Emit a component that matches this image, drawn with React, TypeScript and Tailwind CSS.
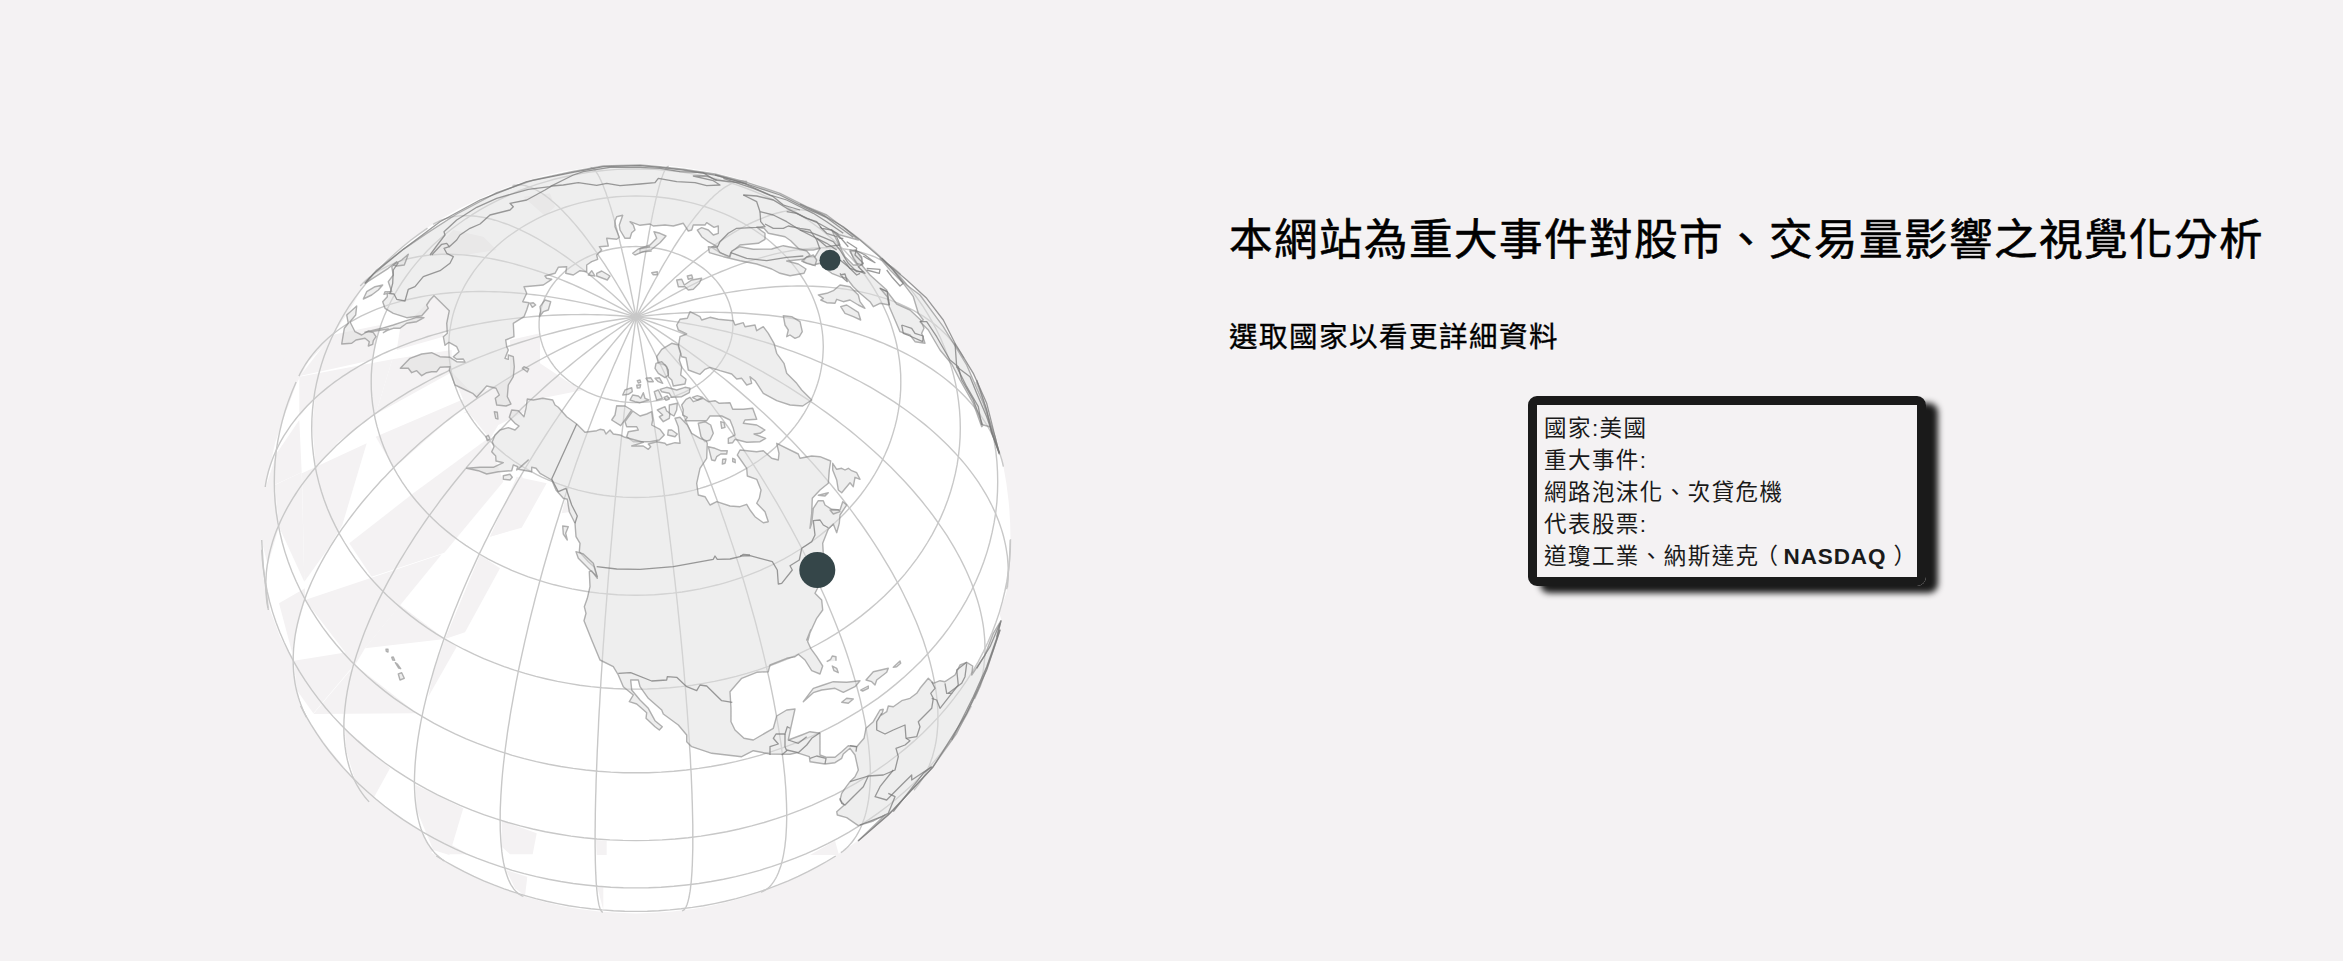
import React from "react";

type Origin = [number, number];
type Part = [Origin, string];

// Sheet origins: every outline is stored in thirds of a pixel, relative to its sheet.
const A: Origin = [250, 150];
const B: Origin = [640, 150];
const C: Origin = [250, 400];
const D: Origin = [450, 380];
const E: Origin = [740, 380];
const F: Origin = [540, 630];
const I: Origin = [600, 310];
const J: Origin = [800, 180];
const K: Origin = [940, 560];
const L: Origin = [255, 325];

const CX = 636;
const CY = 539.2;
const R = 374.5;
const LAT0 = (53.6 * Math.PI) / 180;
const LON0 = -98.73;

function points(parts: Part[]): string {
  return parts
    .map(([o, s]) =>
      s
        .trim()
        .split(/\s+/)
        .map((p) => {
          const [x, y] = p.split(",").map(Number);
          return (o[0] + x / 3).toFixed(1) + " " + (o[1] + y / 3).toFixed(1);
        })
        .join("L"),
    )
    .join("L");
}
const open = (...parts: Part[]) => "M" + points(parts);
const ring = (...parts: Part[]) => "M" + points(parts) + "Z";

function project(lon: number, lat: number): [number, number] | null {
  const l = ((lon - LON0) * Math.PI) / 180;
  const p = (lat * Math.PI) / 180;
  const c = Math.sin(LAT0) * Math.sin(p) + Math.cos(LAT0) * Math.cos(p) * Math.cos(l);
  if (c < 0) return null;
  return [
    CX + R * Math.cos(p) * Math.sin(l),
    CY - R * (Math.cos(LAT0) * Math.sin(p) - Math.sin(LAT0) * Math.cos(p) * Math.cos(l)),
  ];
}

function line(coords: [number, number][]): string {
  let d = "";
  let pen = false;
  for (const [lon, lat] of coords) {
    const q = project(lon, lat);
    if (!q) {
      pen = false;
      continue;
    }
    d += (pen ? "L" : "M") + q[0].toFixed(1) + " " + q[1].toFixed(1);
    pen = true;
  }
  return d;
}

const graticule: string[] = [];
for (let lon = -180; lon < 180; lon += 15) {
  const c: [number, number][] = [];
  for (let lat = 90; lat >= -45; lat -= 1) c.push([lon, lat]);
  graticule.push(line(c));
}
for (let lat = -30; lat < 90; lat += 15) {
  const c: [number, number][] = [];
  for (let lon = LON0 - 180; lon <= LON0 + 180; lon += 2) c.push([lon, lat]);
  graticule.push(line(c));
}

const gaps: string[] = [
  ring([L, "230,30 375,0 352,105 135,153"]),
  ring([L, "437,0 565,0 565,35 425,75"]),
  ring([L, "133,155 412,103 362,268 250,350 182,425 172,300 180,215 133,275"]),
  ring([L, "65,385 133,285 140,442 30,493"]),
  ring([L, "141,445 335,355 262,600 220,670 148,770"]),
  ring([L, "60,480 140,442 148,770 72,605"]),
  ring([L, "10,490 58,478 72,605 38,720 18,640"]),
  ring([L, "72,835 150,790 150,825 118,940 112,985"]),
  ring([L, "362,335 655,210 630,250 570,295 416,430"]),
  ring([L, "412,103 590,75 590,142 362,268"]),
  ring([L, "590,140 655,208 760,165 810,130 810,260 730,300 705,342 640,262"]),
  ring([A, "780,570 870,550 870,640 960,700 1000,720 790,762 640,790 780,700"]),
  ring([L, "283,655 475,505 700,340 745,470 568,683 350,755"]),
  ring([L, "800,450 830,540 800,605 705,635"]),
  ring([D, "200,290 290,310 215,443 120,470"]),
  ring([D, "345,360 365,395 335,400"]),
  ring([C, "165,600 575,463 345,745 315,795"]),
  ring([C, "450,615 585,717 345,745"]),
  ring([C, "132,782 300,755 312,795 190,940 140,870"]),
  ring([C, "315,795 500,940 190,942"]),
  ring([C, "690,465 750,505 645,697 585,717"]),
  ring([C, "585,717 620,740 535,890 550,820"]),
  ring([C, "285,985 420,1105 362,1210 315,1140 288,1050"]),
  ring([C, "497,1155 640,1225 598,1365 550,1350 500,1230"]),
  ring([C, "598,1363 655,1363 605,1335"]),
  ring([C, "755,1262 860,1300 848,1363 780,1363 755,1340"]),
  ring([C, "768,1410 832,1430 825,1488 795,1465"]),
  ring([F, "168,630 200,632 200,675 170,675"]),
  ring([F, "172,770 190,772 190,840"]),
  ring([F, "810,675 885,632 897,675"]),
  ring([F, "955,632 1040,555 1120,490 1180,405 1190,415 1060,570"]),
  ring([A, "450,540 552,440 598,482 592,545"]),
  ring([A, "820,140 900,130 915,170 885,198"]),
  ring([A, "610,240 700,260 740,300 610,320 540,310"]),
  // Slivers between the limb and the outermost grid lines
  ring([C, "140,900 175,960 235,1045 315,1140 410,1225 515,1297 550,1352 500,1400 300,1300 100,1000"]),
  ring([C, "0,500 50,550 60,630 90,710 130,785 140,875 150,920 100,950 0,750"]),
  ring([A, "345,400 300,480 245,560 175,635 140,700 110,780 0,780 250,400"]),
  ring([C, "120,0 75,130 45,268 0,268 40,0"]),
  ring([K, "208,0 203,88 178,160 185,182 260,182 260,0"]),
];

const lands: string[] = [
  // Eurasia
  ring(
    [A, "783,762 768,768 740,765 736,745 748,735 738,715 710,708 680,742 668,730 615,705 598,660 600,650 570,652 560,665 545,665 530,668 515,677 500,662 485,668 475,655 451,655 480,625 515,612 545,608 570,620 600,622 620,635 645,636 640,627 620,628 610,620 627,605 620,590 597,577 585,586 580,560 592,550 590,520 598,482 575,460 552,437 540,450 530,465 535,475 515,497 470,503 430,490 405,475 398,455 412,440 412,430 402,433 405,425 425,425 415,395 430,375 425,350 440,335 415,355 345,400 380,360 460,298 530,250 620,192 740,128 850,90 965,65 1060,48 1170,45"],
    [B, "60,50 130,58 225,72 320,97 420,130 500,170 560,195 620,240 655,270 600,255 575,240 600,290 615,320 640,345 655,345 630,305 645,300 665,320 665,345 690,375 740,420 748,465 720,460 700,470 690,455 660,430 640,410 620,385 600,380 575,370 555,355 540,340 520,345 490,335 500,320 525,320 540,295 520,300 480,300 452,272 435,260 410,255 385,250 372,235 350,232 375,250 375,268 355,280 300,285 272,308 268,322 240,308 215,292 232,290 205,275 185,260 172,240 185,233 205,240 220,255 235,250 235,228 222,232 200,218 195,225 160,225 155,240 145,243 130,220 100,228 75,225 40,228 30,222 0,226"],
    [A, "1140,215 1150,225 1155,240 1145,248 1140,265 1125,265 1110,240 1108,225 1118,196 1100,200 1095,212 1095,230 1108,262 1100,268 1070,265 1075,288 1048,290 1055,300 1040,315 1043,328 1025,335 1010,345 1010,365 990,362 970,375 947,370 950,350 925,352 915,370 885,378 890,385 905,388 880,405 848,408 822,410 830,430 818,455 837,458 830,480 822,500 790,520 792,560 767,570 770,590 775,600 765,625 775,628 775,615 790,620 793,650 790,680 775,705 772,740"],
  ),
  // Norway and Sweden
  ring([B, "205,290 208,308 250,320 300,332 350,342 395,357 420,370 450,377 492,370 498,357 475,342 440,333 490,328 510,315 500,303 480,297 430,287 395,297 340,298 300,290 275,303 270,320 240,308 230,292"]),
  ring([B, "535,435 560,430 580,422 600,405 630,410 655,435 660,455 675,475 655,465 630,450 610,455 590,448 585,460 560,458 542,450 550,445"]),
  ring([B, "602,470 620,465 655,487 662,510 640,500 615,490"]),
  ring([B, "430,497 455,500 480,515 487,545 478,560 465,565 450,555 440,560 445,540 435,525"]),
  // Iberia
  ring([J, "240,325 262,335 290,372 330,390 362,420 372,445 365,460 375,490 345,485 330,465 300,455 285,420 268,380 262,350"]),
  // West Africa
  ring([J, "360,425 385,450 420,510 455,552 480,600 520,670 545,740 550,735 570,740 598,822 585,770 550,670 500,555 430,440 360,345 320,315 270,260 240,235 270,270 310,310 340,350 355,400 370,420"]),
  // Arctic islands of Eurasia
  ring([B, "0,295 30,285 50,265 42,245 60,250 78,258 60,278 35,298 0,308"]),
  open([A, "1200,290 1165,297 1148,310 1155,315 1180,305 1205,303"]),
  ring([B, "110,390 125,388 133,405 155,390 185,385 178,400 160,418 145,420 135,410 115,410"]),
  ring([B, "142,378 155,375 158,385 145,388"]),
  ring([B, "35,368 52,365 52,374 40,374"]),
  ring([A, "1015,375 1025,362 1035,378"]),
  ring([A, "1040,370 1055,363 1080,378 1072,390 1040,378"]),
  ring([A, "870,470 885,450 902,455 895,480 880,485 868,500 872,485"]),
  ring([A, "840,460 850,458 857,465 847,472"]),
  ring([A, "817,655 822,650 836,657 832,666"]),
  // Japan and Kurils
  ring([A, "275,582 283,535 295,520 290,495 320,468 317,495 300,515 315,545 335,555 355,543 370,548 378,560 370,572 368,583 355,588 358,575 345,565 318,570 305,580"]),
  ring([A, "400,548 415,540 430,535 450,535 470,520 500,515 522,503 500,502 460,515 430,525 395,535 345,547 375,543 415,537"]),
  ring([A, "340,447 350,425 375,410 398,405 385,420 365,435"]),
  ring([A, "430,345 455,330 475,313 463,345 440,348"]),
  // Greenland
  ring([I, "235,60 230,45 240,28 262,25 270,5 300,20 305,30 330,22 355,28 400,32 405,45 430,38 435,50 465,45 470,62 490,50 505,70 522,100 530,130 552,160 560,190 590,220 605,240 635,270 608,288 570,285 530,272 490,250 465,212 450,200 455,220 440,225 425,205 410,207 395,192 360,182 330,172 315,178 300,193 265,180 258,143 245,140 235,110 240,80 260,72"]),
  // Ellesmere and northern islands
  ring([I, "170,140 185,118 215,100 235,105 242,130 238,150 245,170 242,195 258,208 255,222 220,228 215,210 205,200 205,180 195,165 175,160"]),
  ring([I, "168,160 185,155 200,170 205,195 195,203 175,190 165,175"]),
  ring([I, "180,238 200,232 230,240 255,232 270,235 268,248 245,260 215,262 208,250 185,245"]),
  ring([I, "163,245 175,240 187,265 170,270"]),
  ring([I, "68,255 75,240 95,233 97,245 85,253"]),
  ring([I, "90,270 98,255 115,258 122,265 130,248 135,265 147,270 120,278 105,275"]),
  ring([I, "138,205 152,203 160,215 145,215"]),
  ring([I, "165,205 178,203 188,220 175,215"]),
  ring([I, "112,212 120,210 122,217 115,219"]),
  ring([I, "110,226 122,224 120,233 112,234"]),
  ring([I, "192,262 202,258 208,267 198,271"]),
  ring([I, "50,287 75,288 95,300 78,325 62,347 35,330 45,315"]),
  ring([I, "98,303 120,318 140,312 155,305 158,330 155,345 180,358 193,375 178,390 150,395 100,395 80,380 85,365 115,360 110,350 80,350 75,335"]),
  ring([I, "172,300 195,290 200,303 210,310 208,325 190,335 178,320 188,315"]),
  ring([I, "208,285 232,280 230,300 222,318 208,310"]),
  ring([I, "205,360 215,360 232,372 225,380 203,375"]),
  // Baffin
  ring([I, "245,285 258,268 270,262 280,275 310,265 325,275 345,272 358,280 390,278 398,298 430,298 458,295 470,328 435,330 430,340 470,345 495,360 480,370 462,372 497,385 480,395 440,397 405,388 398,398 385,400 385,385 405,375 400,355 390,330 365,318 330,318 320,332 255,332 262,322 248,315 250,300"]),
  ring([I, "277,262 292,257 308,262 292,270"]),
  ring([I, "362,335 372,338 375,352 365,355"]),
  ring([I, "325,410 345,415 362,422 382,422 380,432 362,432 350,440 345,452 335,450"]),
  ring([I, "368,448 378,447 375,460 367,462"]),
  ring([I, "398,445 405,448 406,458 398,455"]),
  ring([I, "295,340 315,335 332,345 340,370 330,390 315,395 303,380"]),
  // Continental North America into South America
  ring(
    [D, "380,132 350,110 325,82 315,75 308,60 278,55 250,60 232,57 228,85 222,110 205,92 185,90 178,112 195,130 207,138 195,150 175,143 150,150 135,165 127,185 132,200 125,215 137,228 138,243 160,248 130,262 90,262 50,265 85,272 110,282 145,275 185,272 190,255 203,260 200,270 235,240 205,268 245,275 245,262 258,265 270,280 305,300 318,330 340,355 352,358 358,395 375,430 378,470 390,490 388,515 415,545 432,560 442,595 425,572 418,575 420,620 412,655 403,680 408,700 402,722 425,780"],
    [F, "155,30 180,90 220,110 235,135 250,170 280,195 268,215 290,222 320,248 318,265 345,290 358,300 367,290 345,272 325,235 300,210 275,180 272,150 295,150 300,170 325,205 365,240 370,252 415,285 440,315 440,335 455,350 515,370 605,380 640,362 690,372 750,373 770,368 808,380 810,395 855,402 885,398 905,385 910,372 930,355 945,375 955,420 945,440 930,455 915,475 905,490 900,510 913,525 890,545 892,555 920,563 955,587 1000,573 1035,555 955,632 1060,540 1175,415 1250,310 1320,170 1360,60 1380,0"],
    [K, "170,230 183,182 160,220 135,285 105,330 95,345 98,318 80,307 60,315 45,345 15,365 0,362"],
    [F, "1180,160 1165,145 1140,175 1130,190 1110,205 1085,212 1060,230 1045,228 1040,245 1025,255 1030,238 1020,240 1000,275 978,295 972,325 950,350 925,347 905,365 885,382 860,382 840,375 840,310 810,305 785,315 745,330 752,295 765,237 740,240 710,258 700,295 640,330 612,325 585,300 573,275 573,235 570,185 605,145 650,127 685,125 690,105 740,85 765,80 775,73 795,90 815,122 840,132 848,108 830,80 812,55 803,35 812,0"],
    [E, "200,780 230,715 248,690 245,660 225,640 235,620 248,575 250,520 248,490 265,447 280,432 290,458 298,430 300,405 320,375 308,365 300,390 275,388 255,375 250,362 235,362 220,385 215,430 210,445 215,400 217,355 240,330 265,310 268,270 272,243 240,230 215,228 180,235 175,222 110,190 117,220 115,240 95,235 70,212 50,215 0,210"],
    [I, "412,435 440,475 442,498 470,508 483,540 478,565"],
    [E, "50,370 75,395 85,425 70,428 45,410 30,390 20,373 0,380"],
    [D, "870,380 840,378 800,365 780,375 765,350 745,345 740,310 750,265 770,235 772,190"],
    [I, "318,392 300,385 275,370 262,345 240,322 225,325 235,350 240,400 225,398 200,405 195,400 170,395 145,402 152,410 145,418 130,408 95,408 130,397 75,382 60,375 40,372 30,360 18,372 12,360 0,358"],
    [D, "440,152 405,157"],
  ),
  ring([D, "378,515 400,522 430,550 442,590 420,570 385,535"]),
  ring([D, "338,438 355,440 347,460 352,480 340,462"]),
  ring([D, "160,287 180,283 187,292 180,300 160,298"]),
  ring([D, "133,95 142,97 144,117 137,115"]),
  ring([D, "108,170 115,166 120,177 112,182"]),
  // Newfoundland and nearby
  ring([E, "278,250 290,268 305,265 315,270 325,265 335,272 350,278 360,298 345,292 340,320 330,308 305,338 295,330 290,300 278,270"]),
  ring([E, "235,346 265,338 255,348"]),
  ring([E, "270,390 295,390 300,395 280,402"]),
  // Caribbean
  ring([F, "790,215 820,175 850,165 880,155 920,157 960,152 945,170 910,187 885,175 845,180 820,188"]),
  ring([F, "978,150 1000,125 1045,115 1040,127 1010,150 1005,165 995,155"]),
  ring([F, "905,217 920,205 940,207 925,220"]),
  ring([F, "1060,112 1080,93 1082,100 1070,110"]),
  ring([F, "962,180 985,168 985,175 968,183"]),
  ring([F, "877,108 890,115 895,128 882,122"]),
  open([F, "860,95 872,88 877,78 888,80 888,92"]),
  // Hawaii
  ring([C, "445,822 455,818 463,835 450,840"]),
  ring([C, "408,748 414,748 414,756 409,754"]),
  ring([C, "425,772 430,771 434,781 428,780"]),
  ring([C, "436,788 442,792 452,806 446,804"]),
  // Denmark
  ring([B, "500,322 520,315 530,330 525,347 500,340 485,333"]),
  // Italy
  ring([B, "630,300 650,305 665,325 668,345 650,340 640,325"]),
];

const borders: string[] = [
  open([A, "345,400 370,372 460,298 570,215 690,150 830,95 965,68 1060,50 1170,47"], [B, "60,52 130,60 230,76 320,102 420,135 500,175 560,203 640,262"]),
  open([A, "540,315 562,285 585,255 582,245 620,210 680,172 740,145 835,118 900,110 940,90 970,75 1000,65 1080,52 1170,52"], [B, "60,55 120,65 190,68 225,90 320,100"]),
  open([A, "545,315 575,283 590,280 598,290 620,270 630,255 660,235 690,222 720,195 780,180 790,170 780,160 830,150 885,120 905,108 940,105 985,98 1040,106 1070,100 1110,107 1170,102"], [B, "45,98 55,85 110,95 165,98 200,107 240,105 220,92 160,78 200,78 230,90"]),
  open([A, "598,290 582,295 590,310 610,320 600,340 570,362 520,380 495,410 475,418 465,453 440,448 432,432 415,430"]),
  open([A, "420,430 428,400 430,360 445,338"]),
  open([B, "310,135 350,138 400,150 440,175 490,200 540,222 590,250 625,290"]),
  open([B, "310,135 350,155 360,185 400,195 440,215 480,240 530,265 560,280 590,300"]),
  open([B, "360,185 362,215 375,230 350,232 290,235 265,250 240,275 232,292"]),
  open([B, "375,222 400,235 430,235 445,228 480,235 510,240 530,270 540,298"]),
  open([B, "440,185 470,190 500,205 530,215 545,235 575,240 600,265 610,265"]),
  open([B, "480,240 520,250 550,262 580,275 600,300 625,340 650,365 670,365"]),
  open([B, "530,265 560,290 600,285 590,260 560,250 540,230"]),
  open([B, "600,330 625,350 650,375 660,370"]),
  open([B, "600,375 615,372 622,395 610,385 600,370"]),
  open([B, "225,75 300,95 390,135 440,150 520,190 560,215 610,250"]),
  open([B, "250,85 340,115 400,140 430,165 480,180"]),
  open([B, "272,308 320,325 380,332 440,322 490,318"]),
  open([J, "0,72 60,100 130,140 180,180 250,240 320,300 380,355 430,420 465,490 520,580 560,670 598,820"]),
  open([J, "140,185 170,205 165,225 190,250 175,260 195,280 150,265 130,240"]),
  open([J, "200,265 240,268 238,280 200,270"]),
  open([J, "165,210 195,225 225,248 200,235 190,228"]),
  open([J, "245,235 280,270 310,310 300,318 275,290 260,270"]),
  open([J, "240,325 262,335 268,375"]),
  open([J, "305,435 335,445 345,460 370,468 368,485 330,468 310,460 305,435"]),
  open([J, "360,425 380,425 410,470 450,540 475,560 485,600 520,660 548,735"]),
  open([J, "465,490 470,560 510,590 530,640 560,710 598,820"]),
  open([J, "470,560 500,620 535,680 545,735"]),
  open([J, "530,600 560,690 575,760 598,820"]),
  open([D, "380,132 305,297 325,335 348,325 365,375 382,408 375,430"]),
  open([D, "440,560 500,567 570,568 670,560 790,538 795,528 802,538 840,537 870,530 880,523 900,525"]),
  open([E, "0,528 30,527 60,535 97,545 112,570 115,612 125,610 157,570 150,557 178,540 185,505 215,485 225,465 220,422 240,420 250,435 265,443"]),
  open([F, "235,130 272,128 335,153 380,150 382,140 410,142 440,170 470,182 480,165 500,168 545,212 577,217"]),
  open([F, "690,375 690,350 715,342 700,325 708,312 735,312 742,290 750,295"]),
  open([F, "735,312 735,350 740,362 725,375"]),
  open([F, "740,360 775,368 800,345 815,325 840,308"]),
  open([F, "745,330 775,340 800,320"]),
  open([F, "810,385 830,378 858,385 855,402"]),
  open([F, "930,347 950,350 948,365"]),
  open([F, "1025,250 1010,275 1010,300 1035,312 1060,300 1095,285 1098,325 1110,332 1095,345 1068,355 1075,380 1065,420 1030,435 985,438 930,455"]),
  open([F, "985,438 970,470 935,505 915,525 905,520 900,505"]),
  open([F, "1060,420 1020,470 1005,500 1040,510 1060,490 1090,460 1115,435 1115,450 1175,410"]),
  open([F, "1045,490 1065,500 1045,550 1025,560 960,585"]),
  open([F, "1098,325 1130,320 1140,290 1135,275 1175,235 1180,205 1172,190 1185,175 1175,155"]),
  open([F, "1175,205 1190,210 1200,235 1235,190 1220,190 1215,160"]),
  open([F, "1235,190 1255,165 1250,120 1280,97"]),
  open([F, "1225,190 1265,160 1275,140 1280,100"]),
  open([F, "1380,0 1340,120 1280,250 1180,410 1045,555 955,632"]),
  open([F, "1175,410 1150,430 1060,545"]),
  open([K, "183,182 170,235 140,320 100,410 35,540"]),
  open([K, "180,190 150,260 133,288 110,325"]),
];

function Globe() {
  return (
    <svg className="block h-[961px] w-[1172px]" viewBox="0 0 1172 961" fill="none">
      <circle cx={CX} cy={CY - 0.3} r={R} fill="#ffffff" />
      <g fill="#f4f2f3">
        {gaps.map((d, i) => (
          <path key={i} d={d} />
        ))}
      </g>
      <g stroke="#c8c8c8" strokeWidth={1.4}>
        {graticule.map((d, i) => (
          <path key={i} d={d} />
        ))}
        <path d={open([C, "35,420 40,500 55,630"])} />
        <path d={open([E, "811,480 808,550 800,628"])} />
      </g>
      <g fill="#dddddd" fillOpacity={0.5} stroke="#858585" strokeOpacity={0.62} strokeWidth={1.4} strokeLinejoin="round">
        {lands.map((d, i) => (
          <path key={i} d={d} />
        ))}
      </g>
      <g stroke="#7a7a7a" strokeOpacity={0.75} strokeWidth={1.3} strokeLinejoin="round">
        {borders.map((d, i) => (
          <path key={i} d={d} />
        ))}
      </g>
      <circle cx={830} cy={260.3} r={10.5} fill="#354649" />
      <circle cx={817.3} cy={570} r={18} fill="#354649" />
    </svg>
  );
}

export default function App() {
  return (
    <main className="flex h-[961px] w-[2343px] overflow-hidden bg-[#f4f2f3] font-['Liberation_Sans','Noto_Sans_CJK_TC',sans-serif]">
      <Globe />
      <section className="flex flex-col pl-[57px] pt-[207px] text-black">
        <h1 className="h-[66px] whitespace-nowrap text-[43.5px] font-normal leading-[66px] tracking-[1.5px] [-webkit-text-stroke:0.6px_black]">
          本網站為重大事件對股市、交易量影響之視覺化分析
        </h1>
        <h2 className="mt-[43px] h-[42px] whitespace-nowrap text-[28.5px] font-normal leading-[42px] tracking-[1.5px] [-webkit-text-stroke:0.35px_black]">
          選取國家以看更詳細資料
        </h2>
        <div className="ml-[299px] mt-[38px] h-[190px] w-[398px] whitespace-nowrap rounded-[9px] border-[9px] border-[#1a1a1a] px-[7px] py-[8px] text-[22.5px] leading-[32px] tracking-[1.45px] text-[#1a1a1a] shadow-[12px_7px_6px_#1a1a1a]">
          <p>國家:美國</p>
          <p>重大事件:</p>
          <p>網路泡沫化、次貸危機</p>
          <p>代表股票:</p>
          <p>
            道瓊工業、納斯達克
            <span className="inline-block -translate-x-[4px]">（</span>
            <b className="text-[22.5px] tracking-[0.9px]">NASDAQ</b>
            <span className="inline-block translate-x-[7px]">）</span>
          </p>
        </div>
      </section>
    </main>
  );
}
